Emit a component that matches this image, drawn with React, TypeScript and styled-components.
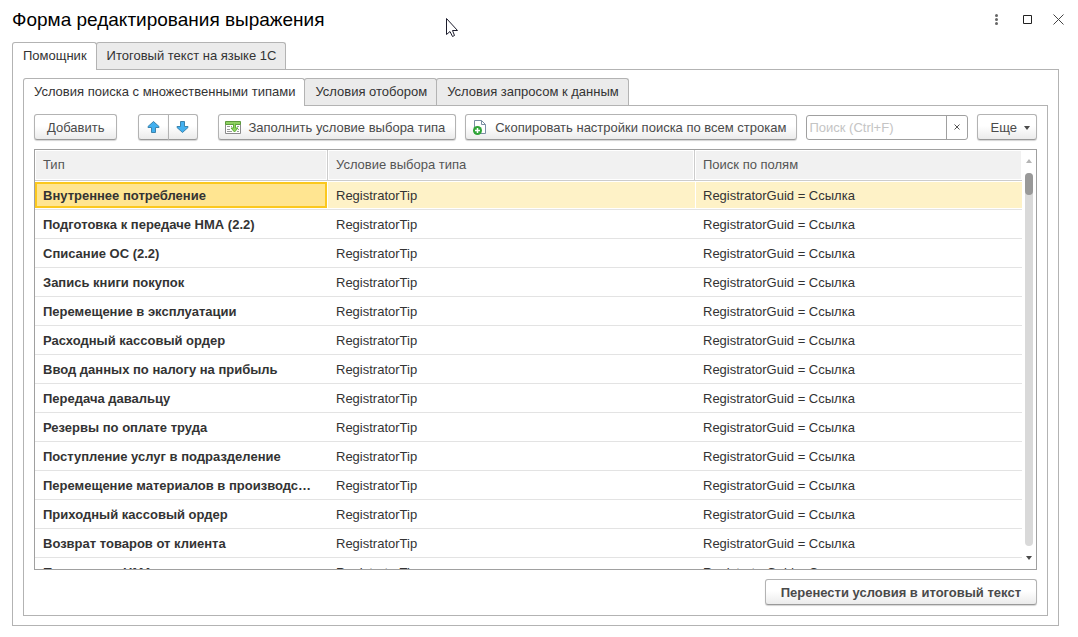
import React from "react";
import styled, { createGlobalStyle, css } from "styled-components";

const GlobalStyle = createGlobalStyle`
  *, *::before, *::after { box-sizing: border-box; }
  body {
    margin: 0;
    background: #fff;
    color: #333;
    font: 13px/16px "Liberation Sans", Arial, sans-serif;
  }
  button, input { font: inherit; color: inherit; margin: 0; }
`;

const Window = styled.main`
  position: relative;
  display: flex;
  flex-direction: column;
  height: 100vh;
  min-height: 320px;
  padding: 0 19px 11px 12px;
`;

const TitleBar = styled.header`
  display: flex;
  align-items: center;
  justify-content: space-between;
  flex: none;
  height: 42px;
  padding-bottom: 3px;
`;

const Title = styled.h1`
  margin: 0;
  color: #000;
  font-size: 19px;
  font-weight: 400;
  line-height: 25px;
`;

const WindowControls = styled.div`
  display: flex;
  gap: 10px;
  margin-right: -10px;
`;

const ControlButton = styled.button`
  display: grid;
  place-items: center;
  width: 21px;
  height: 21px;
  padding: 0;
  border: 0;
  background: none;
`;

const TabList = styled.div`
  display: flex;
  flex: none;
  height: 27px;
`;

const Tab = styled.button<{ $active?: boolean }>`
  height: ${(p) => (p.$active ? 28 : 27)}px;
  padding: 0 9px ${(p) => (p.$active ? 1 : 0)}px 10px;
  border: 1px solid #b3b3b3;
  border-bottom: 0;
  border-radius: 3px 3px 0 0;
  background: ${(p) => (p.$active ? "#fff" : "#ebebeb")};
  white-space: nowrap;
  & + & { margin-left: -1px; }
  ${(p) => p.$active && css`position: relative; z-index: 1;`}
`;

const Panel = styled.section`
  display: flex;
  flex-direction: column;
  flex: 1;
  min-height: 0;
  padding: 8px 10px 9px;
  border: 1px solid #b3b3b3;
`;

const Toolbar = styled.div`
  display: flex;
  align-items: center;
  flex: none;
  gap: 9px;
  height: 26px;
  margin-bottom: 9px;
`;

const Button = styled.button`
  display: flex;
  align-items: center;
  justify-content: center;
  gap: 7px;
  flex: none;
  height: 26px;
  padding: 2px 12px 0;
  border: 1px solid #b3b3b3;
  border-bottom-color: #999;
  border-radius: 3px;
  background: linear-gradient(#fff 45%, #ebebeb);
  box-shadow: 0 1px 1px #d4d4d4;
  color: #4a4a4a;
  white-space: nowrap;
`;

const PrimaryButton = styled(Button)`
  padding: 2px 15px 0;
  font-weight: 700;
`;

const IconTextButton = styled(Button)`
  padding: 2px 10px 0 6px;
`;

const MoreButton = styled(Button)`
  padding: 2px 6px 0 13px;
`;

const MoveGroup = styled.div`
  display: flex;
  margin: 0 11px 0 12px;
`;

const MoveButton = styled(Button)`
  width: 30px;
  padding: 0;
  &:first-child { width: 31px; border-radius: 3px 0 0 3px; }
  &:last-child { margin-left: -1px; border-radius: 0 3px 3px 0; }
`;

const SearchBox = styled.div`
  display: flex;
  flex: 1;
  min-width: 0;
  height: 25px;
  border: 1px solid #a0a0a0;
  border-radius: 3px;
  background: #fff;
`;

const SearchInput = styled.input`
  flex: 1;
  min-width: 0;
  padding: 2px 2px 0;
  border: 0;
  outline: 0;
  background: none;
  &::placeholder { color: #c4c4c4; opacity: 1; }
`;

const ClearButton = styled.button`
  display: grid;
  place-items: center;
  width: 21px;
  padding: 0;
  border: 0;
  border-left: 1px solid #a0a0a0;
  background: none;
`;

const TableFrame = styled.div`
  display: flex;
  flex: 1;
  min-height: 0;
  border: 1px solid #a0a0a0;
`;

const TableViewport = styled.div`
  flex: 1;
  min-width: 0;
  overflow: hidden;
`;

const Table = styled.table`
  width: 100%;
  border-collapse: separate;
  border-spacing: 0;
  table-layout: fixed;
`;

const TypeCol = styled.col`
  width: 293px;
`;

const ConditionCol = styled.col`
  width: 367px;
`;

const HeadCell = styled.th`
  height: 31px;
  padding: 0 8px;
  border-right: 1px solid #ccc;
  border-bottom: 1px solid #ccc;
  background: #f1f1f1;
  box-shadow: inset 0 0 0 1px #fff;
  color: #555;
  font-weight: 400;
  text-align: left;
  &:last-child { border-right: 0; }
`;

const Cell = styled.td`
  height: 29px;
  padding: 2px 8px 0;
  overflow: hidden;
  border-bottom: 1px solid #e3e3e3;
  text-overflow: ellipsis;
  white-space: nowrap;
`;

const TypeCell = styled(Cell)`
  padding-right: 12px;
  font-weight: 700;
`;

const Row = styled.tr<{ $selected?: boolean }>`
  ${(p) => p.$selected && css`
    ${Cell} {
      background: #fef2c7;
      box-shadow: inset 0 1px #fff, inset 0 -1px #fff;
    }
    ${TypeCell} {
      background: #ffe591;
      box-shadow: inset -1px 0 #fff, inset 0 1px #fff, inset 0 -1px #fff,
        inset 2px 0 #fbc81e, inset 0 3px #fbc81e, inset -3px 0 #fbc81e, inset 0 -3px #fbc81e;
    }
    ${Cell} + ${Cell} + ${Cell} {
      box-shadow: inset 1px 0 #fff, inset 0 1px #fff, inset 0 -1px #fff;
    }
  `}
`;

const Scrollbar = styled.div`
  display: flex;
  flex-direction: column;
  align-items: center;
  flex: none;
  width: 14px;
  padding: 9px 0;
  gap: 10px;
`;

const Track = styled.div`
  flex: 1;
  width: 8px;
  border-radius: 4px;
  background: #d9d9d9;
`;

const Thumb = styled.div`
  height: 22px;
  border-radius: 4px;
  background: #999;
`;

const Footer = styled.footer`
  display: flex;
  justify-content: flex-end;
  flex: none;
  padding: 9px 0 1px;
`;

const Pointer = styled.svg`
  position: absolute;
  top: 18px;
  left: 446px;
`;

const ArrowIcon = ({ down }: { down?: boolean }) => (
  <svg width="14" height="14" viewBox="0 0 14 14" aria-hidden="true">
    <path
      d={down ? "M4.5 1.5h4v5h3.5v1L6.5 12.5 1 7.5v-1h3.5z" : "M4.5 12.5h4v-5h3.5v-1L6.5 1.5 1 6.5v1h3.5z"}
      fill="#42b0f0"
      stroke="#3b83ad"
    />
  </svg>
);

const FillIcon = () => (
  <svg width="16" height="14" viewBox="0 0 16 14" aria-hidden="true">
    <path d="M.5 3.5h15v9H.5z" fill="#fff" stroke="#8a8a8a" />
    <path d="M2 5.5h3m1 0h1M2 8.5h3M2 10.500h5M12 5.5h2M13 8.5h1M12 10.500h2" stroke="#999" />
    <path d="M.5.5h15v3H.5z" fill="#8fd162" stroke="#5c9a3d" />
    <path d="M8.500 3h2v4h2.500L9.500 11 6 7h2.500z" fill="#8fd162" stroke="#5fae38" />
    <path d="M9 2h1v3H9z" fill="#8fd162" />
  </svg>
);

const CopyIcon = () => (
  <svg width="16" height="16" viewBox="0 0 16 16" aria-hidden="true">
    <path d="M2.500 .5h7l4 4v9h-11z" fill="#fff" stroke="#7a8ea3" />
    <path d="M9.500 .5v4h4" fill="none" stroke="#7a8ea3" />
    <circle cx="5.500" cy="10.500" r="4.500" fill="#2fa437" />
    <path d="M5.500 8v5M3 10.500h5" stroke="#fff" strokeWidth="1.500" />
  </svg>
);

const CaretIcon = ({ up, color = "#4a4a4a" }: { up?: boolean; color?: string }) => (
  <svg width="6" height="4" viewBox="0 0 6 4" aria-hidden="true">
    <path d={up ? "M0 4 3 0l3 4z" : "M0 0h6L3 4z"} fill={color} />
  </svg>
);

const types = [
  "Внутреннее потребление",
  "Подготовка к передаче НМА (2.2)",
  "Списание ОС (2.2)",
  "Запись книги покупок",
  "Перемещение в эксплуатации",
  "Расходный кассовый ордер",
  "Ввод данных по налогу на прибыль",
  "Передача давальцу",
  "Резервы по оплате труда",
  "Поступление услуг в подразделение",
  "Перемещение материалов в производстве",
  "Приходный кассовый ордер",
  "Возврат товаров от клиента",
  "Переоценка НМА",
];

export default function App() {
  return (
    <>
      <GlobalStyle />
      <Window>
        <TitleBar>
          <Title>Форма редактирования выражения</Title>
          <WindowControls>
            <ControlButton aria-label="Меню">
              <svg width="3" height="11" viewBox="0 0 3 11" fill="#666">
                <circle cx="1.500" cy="1.500" r="1.500" />
                <circle cx="1.500" cy="5.500" r="1.500" />
                <circle cx="1.500" cy="9.500" r="1.500" />
              </svg>
            </ControlButton>
            <ControlButton aria-label="Развернуть">
              <svg width="9" height="9" viewBox="0 0 9 9" fill="none" stroke="#222">
                <path d="M.5.5h8v8h-8z" />
              </svg>
            </ControlButton>
            <ControlButton aria-label="Закрыть">
              <svg width="11" height="11" viewBox="0 0 11 11" fill="none" stroke="#444">
                <path d="m.5.5 10 10M10.500.5l-10 10" />
              </svg>
            </ControlButton>
          </WindowControls>
        </TitleBar>

        <TabList role="tablist">
          <Tab role="tab" aria-selected="true" $active>Помощник</Tab>
          <Tab role="tab" aria-selected="false">Итоговый текст на языке 1С</Tab>
        </TabList>
        <Panel>
          <TabList role="tablist">
            <Tab role="tab" aria-selected="true" $active>Условия поиска с множественными типами</Tab>
            <Tab role="tab" aria-selected="false">Условия отобором</Tab>
            <Tab role="tab" aria-selected="false">Условия запросом к данным</Tab>
          </TabList>
          <Panel>
            <Toolbar>
              <Button>Добавить</Button>
              <MoveGroup>
                <MoveButton aria-label="Переместить вверх"><ArrowIcon /></MoveButton>
                <MoveButton aria-label="Переместить вниз"><ArrowIcon down /></MoveButton>
              </MoveGroup>
              <IconTextButton><FillIcon />Заполнить условие выбора типа</IconTextButton>
              <IconTextButton><CopyIcon />Скопировать настройки поиска по всем строкам</IconTextButton>
              <SearchBox>
                <SearchInput type="text" aria-label="Поиск" placeholder="Поиск (Ctrl+F)" />
                <ClearButton aria-label="Очистить">
                  <svg width="6" height="6" viewBox="0 0 6 6" stroke="#555">
                    <path d="m.5.5 5 5M5.500.5l-5 5" />
                  </svg>
                </ClearButton>
              </SearchBox>
              <MoreButton>Еще<CaretIcon /></MoreButton>
            </Toolbar>

            <TableFrame>
              <TableViewport>
                <Table>
                  <colgroup>
                    <TypeCol />
                    <ConditionCol />
                    <col />
                  </colgroup>
                  <thead>
                    <tr>
                      <HeadCell scope="col">Тип</HeadCell>
                      <HeadCell scope="col">Условие выбора типа</HeadCell>
                      <HeadCell scope="col">Поиск по полям</HeadCell>
                    </tr>
                  </thead>
                  <tbody>
                    {types.map((type, i) => (
                      <Row key={type} $selected={i === 0}>
                        <TypeCell>{type}</TypeCell>
                        <Cell>RegistratorTip</Cell>
                        <Cell>RegistratorGuid = Ссылка</Cell>
                      </Row>
                    ))}
                  </tbody>
                </Table>
              </TableViewport>
              <Scrollbar aria-hidden="true">
                <CaretIcon up color="#b5b5b5" />
                <Track><Thumb /></Track>
                <CaretIcon />
              </Scrollbar>
            </TableFrame>
            <Footer>
              <PrimaryButton>Перенести условия в итоговый текст</PrimaryButton>
            </Footer>
          </Panel>
        </Panel>

        <Pointer width="14" height="20" viewBox="0 0 14 20" aria-hidden="true">
          <path d="M.5.5v16l3.500-3 2.500 5 2-1-2-5h5z" fill="#fff" stroke="#1c1c2c" />
        </Pointer>
      </Window>
    </>
  );
}
